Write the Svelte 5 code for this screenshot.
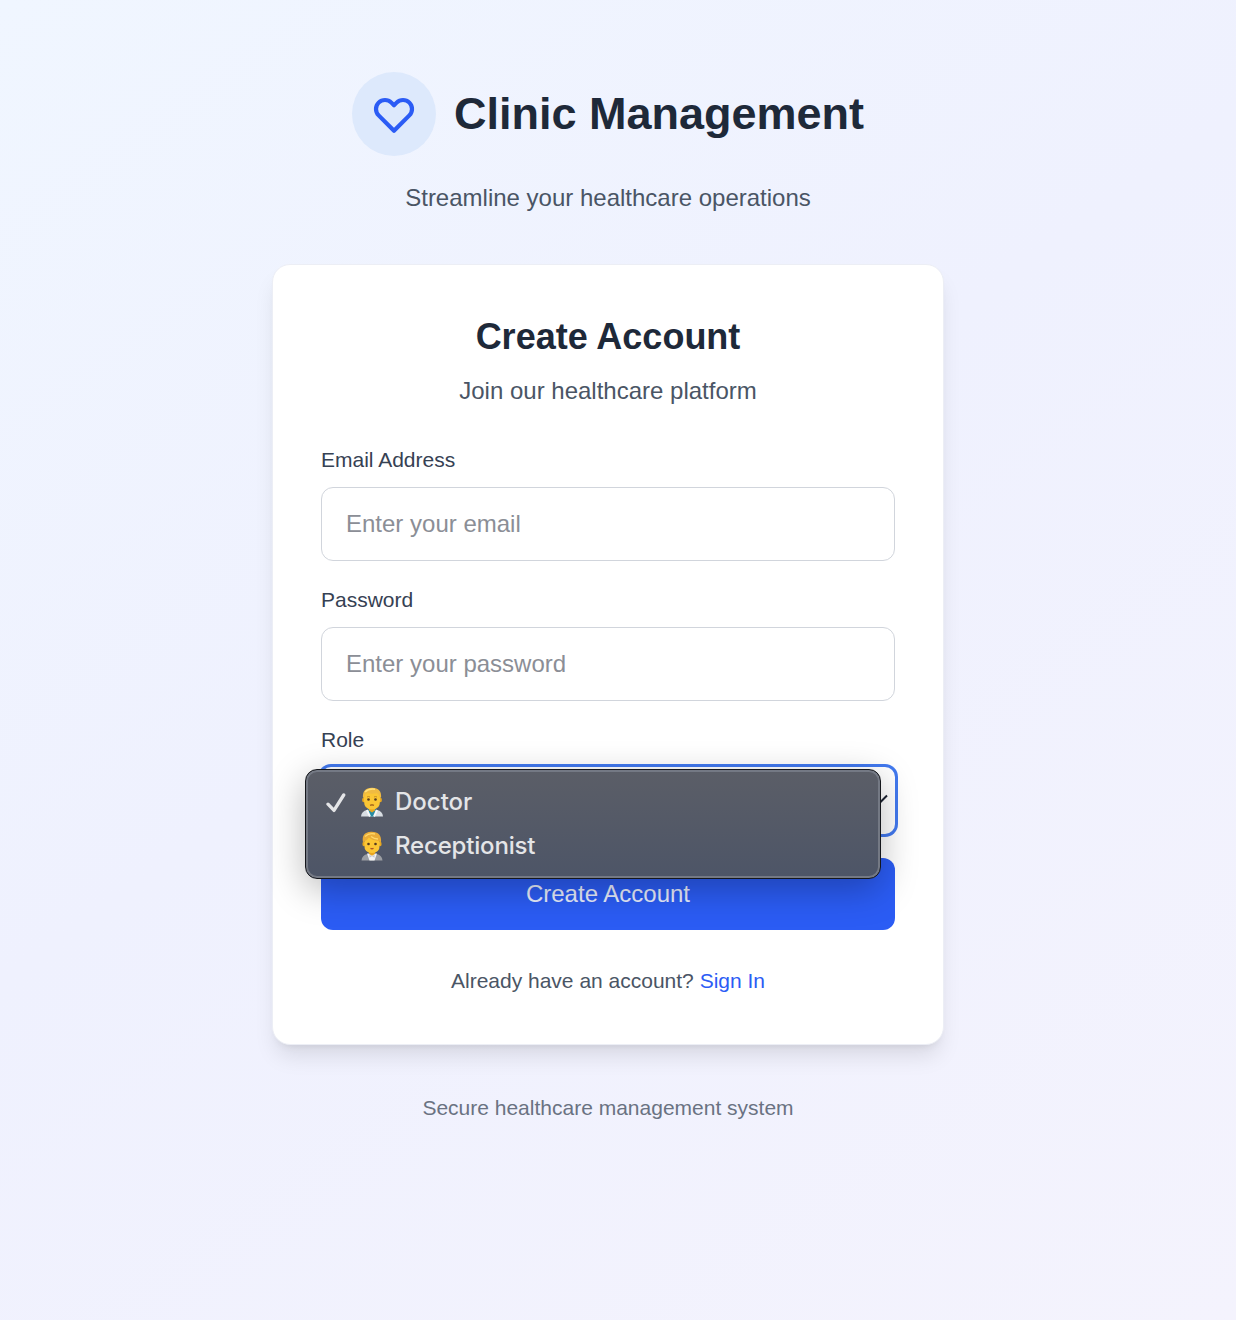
<script>
  let email = $state('');
  let password = $state('');
</script>

<div class="page">
  <header>
    <div class="brand">
      <span class="badge">
        <svg width="48" height="48" viewBox="0 0 24 24" fill="none" stroke="#2b5cf5" stroke-width="2.1" stroke-linecap="round" stroke-linejoin="round">
          <path d="M4.318 6.318a4.5 4.5 0 000 6.364L12 20.364l7.682-7.682a4.5 4.5 0 00-6.364-6.364L12 7.636l-1.318-1.318a4.5 4.5 0 00-6.364 0z" />
        </svg>
      </span>
      <h1>Clinic Management</h1>
    </div>
    <p>Streamline your healthcare operations</p>
  </header>

  <main class="card">
    <h2>Create Account</h2>
    <p class="lead">Join our healthcare platform</p>
    <form>
      <label for="email">Email Address</label>
      <input id="email" type="email" placeholder="Enter your email" bind:value={email} />
      <label for="password">Password</label>
      <input id="password" type="password" placeholder="Enter your password" bind:value={password} />
      <label for="role">Role</label>
      <div class="role">
        <div id="role" class="select">
          <svg width="16" height="12" viewBox="0 0 16 12" fill="none" stroke="#1b2130" stroke-width="2"><path d="M1 1.5l7 7 7-7" /></svg>
        </div>
        <div class="menu" role="listbox">
          <div class="option" role="option" aria-selected="true">
            <svg class="check" width="20" height="20" viewBox="0 0 20 20" fill="none" stroke="#e4e5e7" stroke-width="3.3" stroke-linecap="round" stroke-linejoin="round"><path d="M2 11.2l6 6.2L17.7 2" /></svg>
            <svg class="person" width="24" height="30" viewBox="0 0 24 30">
              <path d="M1 29.5q.5-5.500 6-6.500h10q5.500 1 6 6.500z" fill="#d9dee3" />
              <path d="M8 22h8l-1.500 7.500h-5z" fill="#278ca3" />
              <path d="M7 23l3 6.500M17 23l-3 6.500" stroke="#f7f8f9" stroke-width="2" />
              <path d="M9 19h6v4.500l-3 2-3-2z" fill="#e8a51f" />
              <ellipse cx="3.600" cy="13" rx="1.500" ry="2.300" fill="#e9a91f" /><ellipse cx="20.400" cy="13" rx="1.500" ry="2.300" fill="#e9a91f" />
              <path d="M4 9q0-7 8-7t8 7v5q0 8.500-8 8.500t-8-8.500z" fill="#fbc634" />
              <path d="M3 11Q2 1 12 .8 22 1 21 11l-1.700-1q0-2.500-2.300-3.700Q11 7.400 7 6 4.700 7.500 4.700 10z" fill="#f0bb42" />
              <path d="M5 5q4-3.800 10-2.700" stroke="#ffe07c" stroke-width="1.500" fill="none" />
              <circle cx="8.500" cy="12.500" r="1.300" fill="#553a20" /><circle cx="15.500" cy="12.500" r="1.300" fill="#553a20" />
              <path d="M7 10q1.500-1 3 0M14 10q1.500-1 3 0" stroke="#b67c20" stroke-width=".8" fill="none" />
              <path d="M10 18.200q2-.7 4 0" stroke="#8d4c17" stroke-width="1.200" fill="none" />
            </svg>
            <span>Doctor</span>
          </div>
          <div class="option" role="option" aria-selected="false">
            <i class="check"></i>
            <svg class="person" width="24" height="30" viewBox="0 0 24 30">
              <path d="M1.500 29.500q.5-5.500 6-6.500h9q5.500 1 6 6.500z" fill="#9b9ea3" />
              <path d="M7 22.500h10l-2.500 7h-5z" fill="#f2f3f4" />
              <path d="M9 18h6v5l-3 1.800L9 23z" fill="#e8a51f" />
              <path d="M12 25.200l-2.500-1.500v3zM12 25.200l2.500-1.500v3z" fill="#c5c8cc" />
              <ellipse cx="3.800" cy="13" rx="1.400" ry="2.200" fill="#e9a91f" /><ellipse cx="20.200" cy="13" rx="1.400" ry="2.200" fill="#e9a91f" />
              <path d="M4.300 9q0-7 7.700-7t7.700 7v5q0 8-7.700 8t-7.700-8z" fill="#fbc634" />
              <path d="M3 11.500Q1 1.500 11 .8 22 .5 21 11.500l-1.700-1.500q-7-.5-10.500-3.500Q7 9.500 4.700 10z" fill="#e9ac38" />
              <path d="M5 5.500q4-4 10-2.500M11 5.500q3 2.500 7 2.500" stroke="#ffd86a" stroke-width="1.300" fill="none" />
              <circle cx="8.500" cy="13" r="1.300" fill="#553a20" /><circle cx="15.500" cy="13" r="1.300" fill="#553a20" />
              <path d="M10.500 17.400q1.500.8 3 0" stroke="#a94e24" stroke-width="1.300" fill="none" />
            </svg>
            <span class="long">Receptionist</span>
          </div>
        </div>
      </div>
      <button type="button">Create Account</button>
    </form>
    <p class="signin">Already have an account? <a href="#signin">Sign In</a></p>
  </main>

  <footer>Secure healthcare management system</footer>
</div>

<style>
  .page {
    box-sizing: border-box;
    min-height: 1320px;
    padding: 72px 20px 0 0;
    display: flex;
    flex-direction: column;
    align-items: center;
    background: linear-gradient(145deg, #f0f6ff, #eff1fe 45%, #f4f3fd);
    font-family: "Liberation Sans", Arial, sans-serif;
    font-size: 24px;
    line-height: 36px;
    color: #4a5565;
  }
  h1, h2, p { margin: 0; }
  header { text-align: center; }
  .brand { display: flex; align-items: center; justify-content: center; gap: 18px; margin-bottom: 24px; }
  .badge {
    width: 84px;
    height: 84px;
    border-radius: 50%;
    background: #dde9fc;
    display: flex;
    align-items: center;
    justify-content: center;
  }
  h1 { font-size: 45px; line-height: 54px; color: #1e2939; }
  .card {
    box-sizing: border-box;
    width: 672px;
    height: 781px;
    margin-top: 48px;
    padding: 48px;
    border: 1px solid #eceef5;
    border-radius: 18px;
    background: #fff;
    box-shadow: 0 15px 22px -4px rgb(0 0 0 / 0.1), 0 6px 9px -6px rgb(0 0 0 / 0.1);
  }
  h2 { font-size: 36px; line-height: 48px; color: #1e2939; text-align: center; }
  .lead { margin-top: 12px; text-align: center; }
  form { display: flex; flex-direction: column; margin-top: 36px; }
  label { font-size: 21px; line-height: 30px; color: #364153; margin-bottom: 12px; }
  input {
    box-sizing: border-box;
    width: 100%;
    height: 74px;
    padding: 0 24px;
    margin: 0 0 24px;
    border: 1px solid #d1d5dc;
    border-radius: 12px;
    background: #fff;
    font: inherit;
    color: #1e2939;
    outline: none;
  }
  input::placeholder { color: #8b8e96; opacity: 1; }
  .role { position: relative; height: 67px; margin-bottom: 24px; }
  .select {
    box-sizing: border-box;
    height: 67px;
    border-radius: 10px;
    box-shadow: 0 0 0 3px #4279ef;
    display: flex;
    align-items: center;
    justify-content: flex-end;
    padding: 0 7px 2px 0;
  }
  .menu {
    position: absolute;
    box-sizing: border-box;
    left: -16px;
    top: 2px;
    width: 576px;
    height: 110px;
    padding: 9px 19px 7px 20px;
    border: 1px solid #15171c;
    border-radius: 12px;
    background: linear-gradient(#5b5e67, #4d5567);
    box-shadow: inset 0 0 0 2px #747984, 0 10px 36px rgb(0 0 0 / 0.28);
    font-family: Inter, sans-serif;
    font-weight: 500;
    font-size: 24px;
    color: #e4e5e7;
  }
  .option { display: flex; align-items: center; height: 44px; padding-top: 2px; box-sizing: border-box; }
  .check { width: 20px; flex: none; position: relative; top: 1px; }
  .person { margin: 0 11px 0 14px; flex: none; }
  .long { letter-spacing: -0.18px; }
  button {
    height: 72px;
    padding: 0;
    border: 0;
    border-radius: 12px;
    background: #2b5cf4;
    color: #e8edfc;
    font: inherit;
  }
  .signin { margin-top: 36px; font-size: 21px; line-height: 30px; text-align: center; }
  a { color: #2b5cf5; text-decoration: none; }
  footer { margin-top: 48px; font-size: 21px; line-height: 30px; color: #6a7282; }
</style>
